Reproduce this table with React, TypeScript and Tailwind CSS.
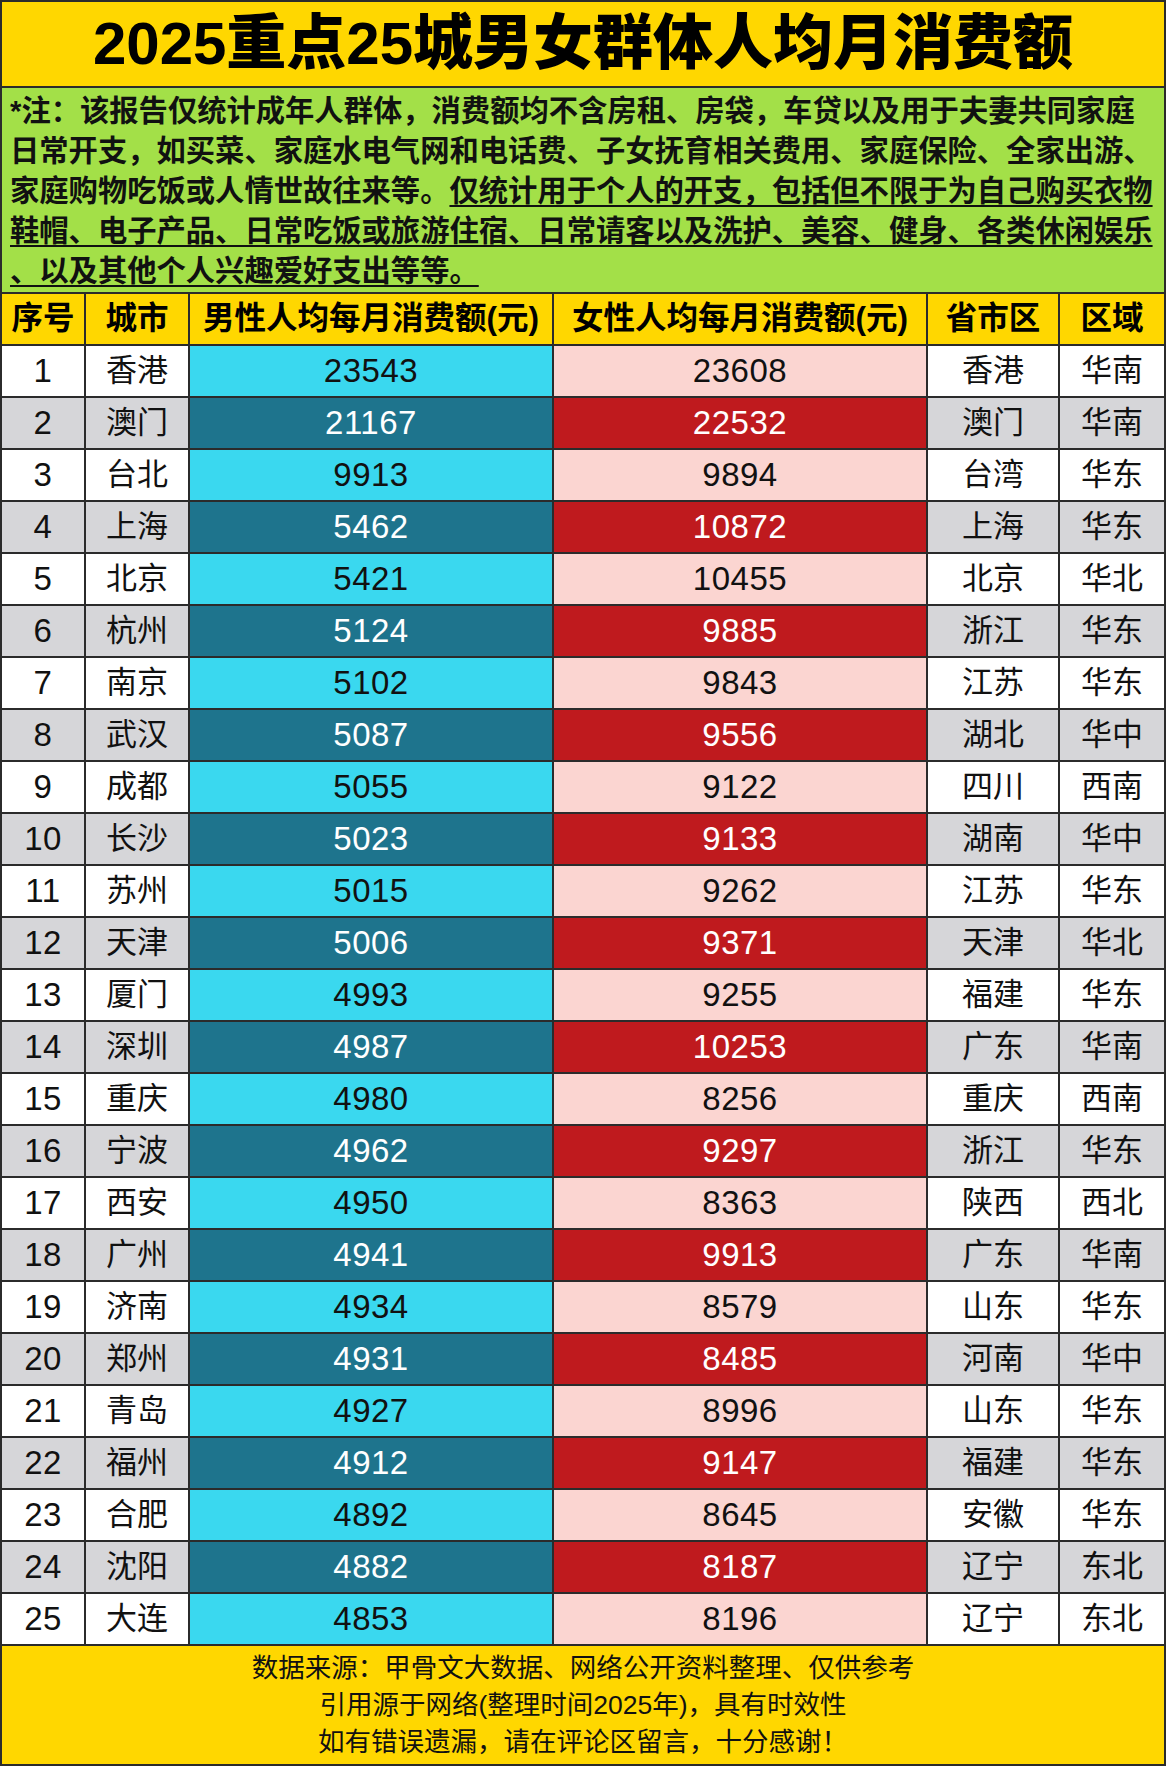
import React from "react";

const rows: [number, string, number, number, string, string][] = [
  [1, "香港", 23543, 23608, "香港", "华南"],
  [2, "澳门", 21167, 22532, "澳门", "华南"],
  [3, "台北", 9913, 9894, "台湾", "华东"],
  [4, "上海", 5462, 10872, "上海", "华东"],
  [5, "北京", 5421, 10455, "北京", "华北"],
  [6, "杭州", 5124, 9885, "浙江", "华东"],
  [7, "南京", 5102, 9843, "江苏", "华东"],
  [8, "武汉", 5087, 9556, "湖北", "华中"],
  [9, "成都", 5055, 9122, "四川", "西南"],
  [10, "长沙", 5023, 9133, "湖南", "华中"],
  [11, "苏州", 5015, 9262, "江苏", "华东"],
  [12, "天津", 5006, 9371, "天津", "华北"],
  [13, "厦门", 4993, 9255, "福建", "华东"],
  [14, "深圳", 4987, 10253, "广东", "华南"],
  [15, "重庆", 4980, 8256, "重庆", "西南"],
  [16, "宁波", 4962, 9297, "浙江", "华东"],
  [17, "西安", 4950, 8363, "陕西", "西北"],
  [18, "广州", 4941, 9913, "广东", "华南"],
  [19, "济南", 4934, 8579, "山东", "华东"],
  [20, "郑州", 4931, 8485, "河南", "华中"],
  [21, "青岛", 4927, 8996, "山东", "华东"],
  [22, "福州", 4912, 9147, "福建", "华东"],
  [23, "合肥", 4892, 8645, "安徽", "华东"],
  [24, "沈阳", 4882, 8187, "辽宁", "东北"],
  [25, "大连", 4853, 8196, "辽宁", "东北"],
];

const font = { fontFamily: '"Liberation Sans", "Noto Sans CJK SC", sans-serif' };

export default function App() {
  return (
    <div
      className="w-[1166px] bg-[#2b2b2b] p-[2px] flex flex-col gap-[2px] text-[#111]"
      style={font}
    >
      <div className="h-[84px] bg-[#ffd700] flex items-center justify-center">
        <div className="text-[60px] leading-none font-black text-black">
          2025重点25城男女群体人均月消费额
        </div>
      </div>

      <div className="h-[204px] bg-[#a3e048] pl-[8px] pt-[3px] text-[29.3px] leading-[40px] font-bold text-[#111] whitespace-nowrap">
        <div>*注：该报告仅统计成年人群体，消费额均不含房租、房袋，车贷以及用于夫妻共同家庭</div>
        <div>日常开支，如买菜、家庭水电气网和电话费、子女抚育相关费用、家庭保险、全家出游、</div>
        <div>
          家庭购物吃饭或人情世故往来等。
          <span className="underline decoration-2 underline-offset-[4px]">
            仅统计用于个人的开支，包括但不限于为自己购买衣物
          </span>
        </div>
        <div>
          <span className="underline decoration-2 underline-offset-[4px]">
            鞋帽、电子产品、日常吃饭或旅游住宿、日常请客以及洗护、美容、健身、各类休闲娱乐
          </span>
        </div>
        <div>
          <span className="underline decoration-2 underline-offset-[4px]">
            、以及其他个人兴趣爱好支出等等。
          </span>
        </div>
      </div>

      <div className="grid grid-cols-[82px_102px_362px_372px_130px_104px] gap-x-[2px] h-[50px] text-[31.5px] font-bold text-black">
        <div className="bg-[#ffd700] flex items-center justify-center">序号</div>
        <div className="bg-[#ffd700] flex items-center justify-center">城市</div>
        <div className="bg-[#ffd700] flex items-center justify-center">男性人均每月消费额(元)</div>
        <div className="bg-[#ffd700] flex items-center justify-center">女性人均每月消费额(元)</div>
        <div className="bg-[#ffd700] flex items-center justify-center">省市区</div>
        <div className="bg-[#ffd700] flex items-center justify-center">区域</div>
      </div>

      {rows.map(([i, city, m, f, prov, reg]) => {
        const even = i % 2 === 0;
        const side = even ? "bg-[#d6d6d9] text-[#111]" : "bg-white text-[#111]";
        const male = even ? "bg-[#1e748d] text-white" : "bg-[#3ad8ef] text-[#111]";
        const female = even ? "bg-[#bf1a1e] text-white" : "bg-[#fbd5d1] text-[#111]";
        return (
          <div
            key={i}
            className="grid grid-cols-[82px_102px_362px_372px_130px_104px] gap-x-[2px] h-[50px]"
          >
            <div className={`${side} flex items-center justify-center text-[33px] tracking-[0.5px]`}>{i}</div>
            <div className={`${side} flex items-center justify-center text-[31px]`}>{city}</div>
            <div className={`${male} flex items-center justify-center text-[33px] tracking-[0.5px]`}>{m}</div>
            <div className={`${female} flex items-center justify-center text-[33px] tracking-[0.5px]`}>{f}</div>
            <div className={`${side} flex items-center justify-center text-[31px]`}>{prov}</div>
            <div className={`${side} flex items-center justify-center text-[31px]`}>{reg}</div>
          </div>
        );
      })}

      <div className="h-[118px] bg-[#ffd700] flex flex-col items-center justify-center text-[26.5px] leading-[37px] text-[#111]">
        <div>数据来源：甲骨文大数据、网络公开资料整理、仅供参考</div>
        <div>引用源于网络(整理时间2025年)，具有时效性</div>
        <div>如有错误遗漏，请在评论区留言，十分感谢！</div>
      </div>
    </div>
  );
}
